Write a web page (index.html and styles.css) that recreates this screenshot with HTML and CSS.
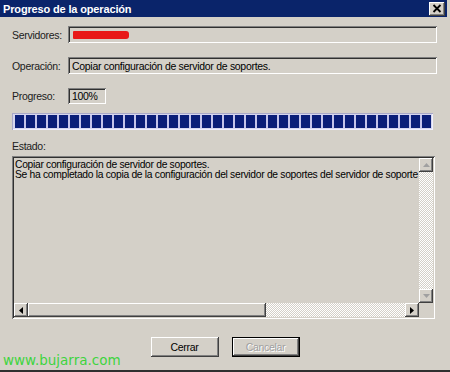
FILE: index.html
```html
<!DOCTYPE html>
<html lang="es">
<head>
    <meta charset="UTF-8">
    <title>Progreso de la operación</title>
    <link rel="stylesheet" href="styles.css">
</head>
<body>
    <div class="window">
        <!-- Barra de título -->
        <div class="titlebar">
            <span class="title">Progreso de la operación</span>
            <span class="close-btn">
                <svg width="10" height="9" viewBox="0 0 10 9">
                    <path d="M1.5 1 L8.5 8 M8.5 1 L1.5 8" stroke="#000" stroke-width="1.8"/>
                </svg>
            </span>
        </div>

        <div class="content">
            <div class="form">
                <span class="label">Servidores:</span>
                <div class="field"><span class="redacted"></span></div>

                <span class="label">Operación:</span>
                <div class="field">Copiar configuración de servidor de soportes.</div>

                <span class="label">Progreso:</span>
                <div class="field field-short">100%</div>
            </div>

            <div class="progress">
                <div class="progress-fill" style="width: 100%"></div>
            </div>

            <div class="estado-label">Estado:</div>

            <!-- Caja de registro con barras de desplazamiento -->
            <div class="log">
                <div class="log-main">
                    <div class="log-text">
                        <div>Copiar configuración de servidor de soportes.</div>
                        <div>Se ha completado la copia de la configuración del servidor de soportes del servidor de soporte</div>
                    </div>
                    <div class="vscroll">
                        <span class="sb-btn">
                            <svg width="7" height="4" viewBox="0 0 7 4"><polygon points="3.5,0 7,4 0,4" fill="#a0a0a0"/></svg>
                        </span>
                        <span class="sb-track"></span>
                        <span class="sb-btn">
                            <svg width="7" height="4" viewBox="0 0 7 4"><polygon points="0,0 7,0 3.5,4" fill="#a0a0a0"/></svg>
                        </span>
                    </div>
                </div>
                <div class="hscroll">
                    <span class="sb-btn">
                        <svg width="4" height="7" viewBox="0 0 4 7"><polygon points="4,0 4,7 0,3.5" fill="#000"/></svg>
                    </span>
                    <span class="sb-thumb"></span>
                    <span class="sb-track"></span>
                    <span class="sb-btn">
                        <svg width="4" height="7" viewBox="0 0 4 7"><polygon points="0,0 4,3.5 0,7" fill="#000"/></svg>
                    </span>
                    <span class="sb-corner"></span>
                </div>
            </div>

            <div class="buttons">
                <button class="btn">Cerrar</button>
                <button class="btn btn-disabled">Cancelar</button>
            </div>
        </div>

        <div class="watermark">www.bujarra.com</div>
    </div>
</body>
</html>
```

FILE: styles.css
```css
* {
    margin: 0;
    padding: 0;
    box-sizing: border-box;
}

body {
    font-family: 'Liberation Sans', Arial, sans-serif;
    font-size: 10.5px;
    letter-spacing: -0.3px;
    color: #000;
    background-color: #d4d0c8;
}

.window {
    position: relative;
    width: 450px;
    height: 372px;
    background-color: #d4d0c8;
    border-bottom: 2px solid #303030;
    overflow: hidden;
}

.titlebar {
    height: 17px;
    margin-right: 3px;
    background-color: #0a246a;
    display: flex;
    align-items: center;
    justify-content: space-between;
    padding: 0 2px 0 3px;
}

.title {
    color: #fff;
    font-weight: bold;
    font-size: 11px;
    letter-spacing: -0.15px;
}

.close-btn {
    width: 16px;
    height: 14px;
    background-color: #d4d0c8;
    display: flex;
    align-items: center;
    justify-content: center;
    box-shadow: inset -1px -1px #404040, inset 1px 1px #fff, inset -2px -2px #808080;
}

.content {
    padding: 9px 15px 0 12px;
}

.form {
    display: grid;
    grid-template-columns: 56px 369px;
    grid-template-rows: 17px 17px 16px;
    row-gap: 14px;
    align-items: center;
}

.label {
    color: #202020;
}

.field {
    height: 100%;
    display: flex;
    align-items: center;
    padding: 0 4px;
    background-color: #d4d0c8;
    box-shadow: inset 1px 1px #808080, inset -1px -1px #fff, inset 2px 2px #303030;
}

.field-short {
    width: 38px;
}

.redacted {
    width: 56px;
    height: 8px;
    margin-left: 1px;
    background-color: #e81818;
    border-radius: 1px 3px 3px 1px;
}

.progress {
    width: 421px;
    height: 17px;
    margin-top: 9px;
    padding: 2px 2px 2px 3px;
    background-color: #d6d6ee;
    box-shadow: inset 1px 1px #a8a8c8, inset -1px -1px #f0f0ff;
}

.progress-fill {
    height: 100%;
    background: repeating-linear-gradient(90deg, #0a1e78 0 9px, #c4c4ea 9px 11px);
}

.estado-label {
    margin-top: 10px;
    line-height: 12px;
    margin-bottom: 4px;
    color: #202020;
}

.log {
    width: 423px;
    height: 163px;
    padding: 2px;
    display: flex;
    flex-direction: column;
    box-shadow: inset 1px 1px #808080, inset -1px -1px #fff, inset 2px 2px #303030, inset -2px -2px #d4d0c8;
}

.log-main {
    flex: 1;
    display: flex;
}

.log-text {
    flex: 1;
    padding: 2px 0 0 1px;
    font-size: 10.3px;
    line-height: 10px;
    white-space: nowrap;
    overflow: hidden;
}

.vscroll {
    width: 14px;
    display: flex;
    flex-direction: column;
}

.hscroll {
    height: 14px;
    display: flex;
}

.sb-btn {
    width: 14px;
    height: 14px;
    flex-shrink: 0;
    background-color: #d4d0c8;
    display: flex;
    align-items: center;
    justify-content: center;
    box-shadow: inset -1px -1px #404040, inset 1px 1px #fff, inset -2px -2px #808080;
}

.sb-track {
    flex: 1;
    background: repeating-conic-gradient(#fff 0 25%, #d4d0c8 0 50%) 0 0 / 2px 2px;
}

.sb-thumb {
    width: 238px;
    background-color: #d4d0c8;
    box-shadow: inset -1px -1px #404040, inset 1px 1px #fff, inset -2px -2px #808080;
}

.sb-corner {
    width: 14px;
    background-color: #d4d0c8;
}

.buttons {
    display: flex;
    justify-content: center;
    gap: 13px;
    margin-top: 18px;
    padding-left: 3px;
}

.btn {
    width: 68px;
    height: 20px;
    font-family: inherit;
    font-size: 10.5px;
    letter-spacing: -0.3px;
    color: #000;
    background-color: #d4d0c8;
    border: none;
    box-shadow: inset -1px -1px #404040, inset 1px 1px #fff, inset -2px -2px #808080;
}

.btn-disabled {
    color: #a0a0a0;
    text-shadow: 1px 1px #fff;
    box-shadow: inset 0 0 0 1px #000, inset -2px -2px #404040, inset 2px 2px #fff, inset -3px -3px #808080;
}

.watermark {
    position: absolute;
    left: 3px;
    bottom: 2px;
    font-family: 'DejaVu Sans', Verdana, sans-serif;
    font-size: 13.5px;
    letter-spacing: 0;
    line-height: 16px;
    color: #3ed43e;
}
```
